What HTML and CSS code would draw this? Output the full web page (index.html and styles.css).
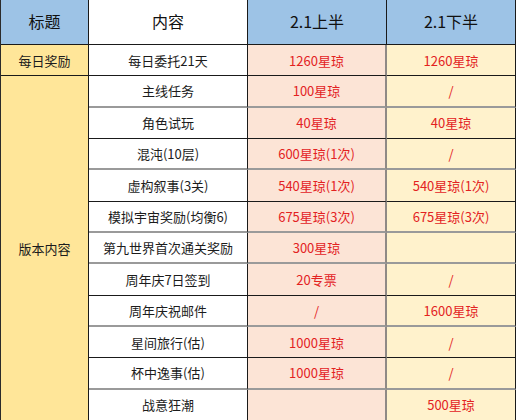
FILE: index.html
```html
<!DOCTYPE html>
<html lang="zh">
<head>
<meta charset="utf-8">
<link rel="stylesheet" href="styles.css">
</head>
<body>
<div class="sheet">
  <div class="c h c1">标题</div>
  <div class="c h c2">内容</div>
  <div class="c h c3 hb">2.1上半</div>
  <div class="c h c4">2.1下半</div>

  <div class="c c1 y bk">每日奖励</div>
  <div class="c c2 bk">每日委托21天</div>
  <div class="c c3 r bk">1260星琼</div>
  <div class="c c4 r bk">1260星琼</div>

  <div class="c c1 y span">版本内容</div>

  <div class="c c2 gr">主线任务</div>
  <div class="c c3 r gr">100星琼</div>
  <div class="c c4 r gr">/</div>

  <div class="c c2 bk">角色试玩</div>
  <div class="c c3 r bk">40星琼</div>
  <div class="c c4 r bk">40星琼</div>

  <div class="c c2 gr">混沌(10层)</div>
  <div class="c c3 r gr">600星琼(1次)</div>
  <div class="c c4 r gr">/</div>

  <div class="c c2 bk">虚构叙事(3关)</div>
  <div class="c c3 r bk">540星琼(1次)</div>
  <div class="c c4 r bk">540星琼(1次)</div>

  <div class="c c2 gr">模拟宇宙奖励(均衡6)</div>
  <div class="c c3 r gr">675星琼(3次)</div>
  <div class="c c4 r gr">675星琼(3次)</div>

  <div class="c c2 gr">第九世界首次通关奖励</div>
  <div class="c c3 r gr">300星琼</div>
  <div class="c c4 r gr"></div>

  <div class="c c2 bk">周年庆7日签到</div>
  <div class="c c3 r bk">20专票</div>
  <div class="c c4 r bk">/</div>

  <div class="c c2 gr">周年庆祝邮件</div>
  <div class="c c3 r gr">/</div>
  <div class="c c4 r gr">1600星琼</div>

  <div class="c c2 bk">星间旅行(估)</div>
  <div class="c c3 r bk">1000星琼</div>
  <div class="c c4 r bk">/</div>

  <div class="c c2 gr">杯中逸事(估)</div>
  <div class="c c3 r gr">1000星琼</div>
  <div class="c c4 r gr">/</div>

  <div class="c c2 bk">战意狂潮</div>
  <div class="c c3 r bk"></div>
  <div class="c c4 r bk">500星琼</div>
</div>
</body>
</html>
```

FILE: styles.css
```css
html, body {
  margin: 0;
  padding: 0;
  background: #ffffff;
  overflow: hidden;
}

.sheet {
  display: grid;
  grid-template-columns: 88px 159px 139px 129px;
  grid-template-rows: 45px repeat(12, 31.33px);
  width: 515px;
  border-left: 1px solid #2b2b2b;
  font-family: "Noto Sans CJK SC", "Noto Sans", sans-serif;
  font-size: 13px;
  color: #1c1c1c;
}

.c {
  box-sizing: border-box;
  display: flex;
  align-items: center;
  justify-content: center;
  white-space: nowrap;
  line-height: 1;
  border-right: 1px solid #1a1a1a;
}

.h {
  background: #9dc3e6;
  font-size: 16px;
  font-weight: 400;
  color: #111;
  border-bottom: 1px solid #1a1a1a;
  padding-bottom: 3px;
}

.c2 { background: #ffffff; }
.c3 { background: #fce4d6; border-right: 2px solid #8f8a86; }
.c4 { background: #fff2cc; }
.c3.hb { background: #9dc3e6; border-right: 1px solid #1a1a1a; width: 139px; }
.h.c4 { background: #9dc3e6; }

.y { background: #ffe699; }

.r { color: #e3221f; }

.bk { border-bottom: 1px solid #1a1a1a; }
.gr { border-bottom: 2px solid #9a9a9a; }

.span {
  grid-row: span 11;
  border-bottom: 1px solid #1a1a1a;
}
```
